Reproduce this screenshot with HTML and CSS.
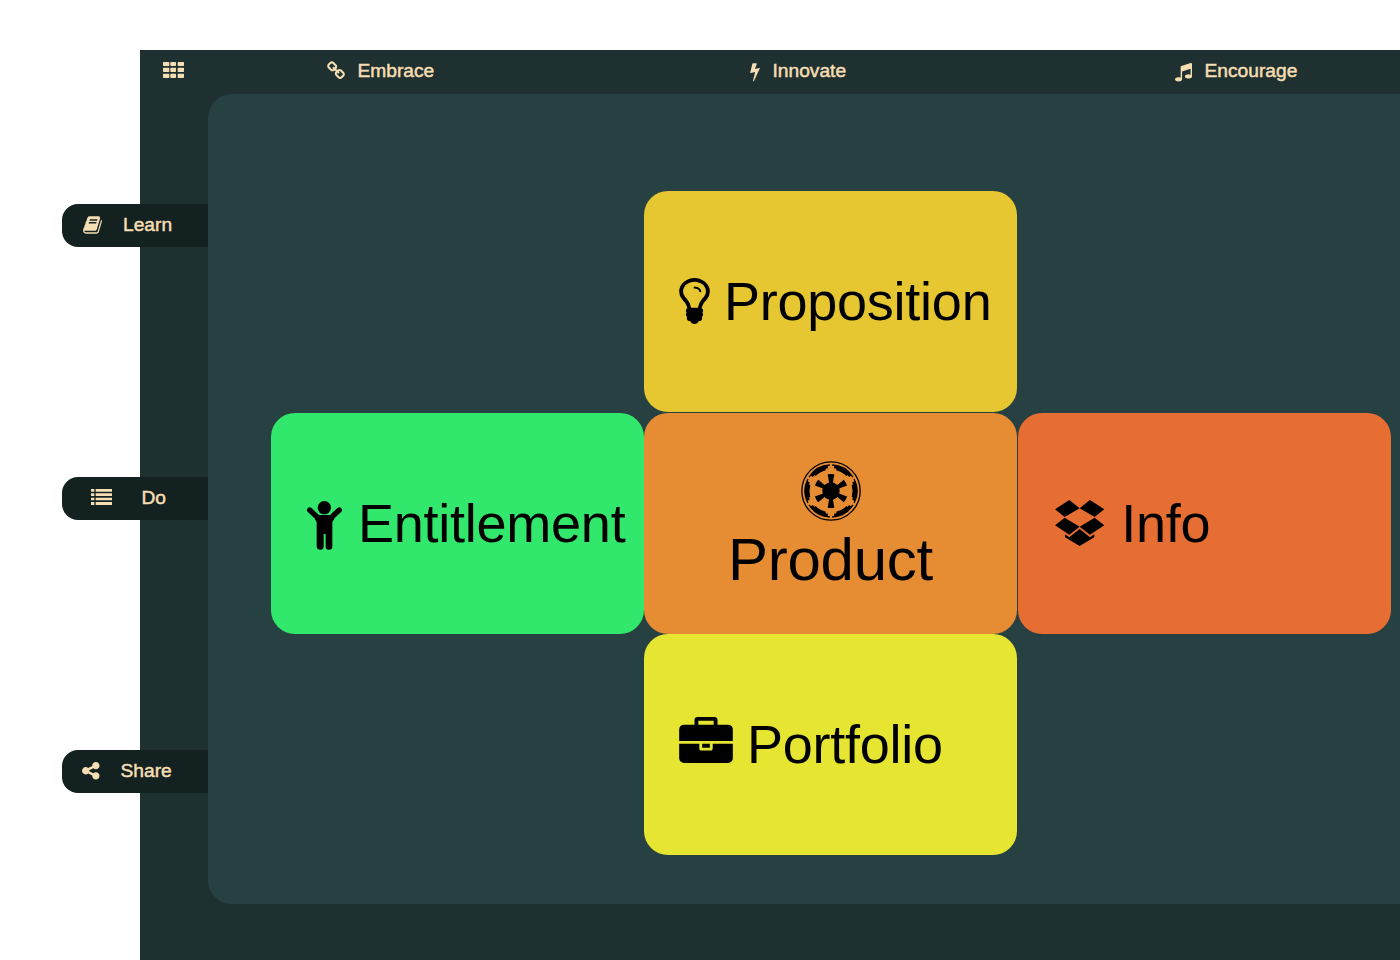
FILE: index.html
```html
<!DOCTYPE html>
<html lang="en">
<head>
<meta charset="utf-8">
<title>Product</title>
<link rel="stylesheet" href="styles.css">
</head>
<body>
<div class="app">
  <header class="topbar">
    <a class="menu"><svg class="icon menu-icon" viewBox="0 0 63 48"><path d="M2 0h15q2 0 2 2v8q0 2-2 2H2q-2 0-2-2V2q0-2 2-2zM24 0h13q2 0 2 2v8q0 2-2 2H24q-2 0-2-2V2q0-2 2-2zM46 0h15q2 0 2 2v8q0 2-2 2H46q-2 0-2-2V2q0-2 2-2zM2 17h15q2 0 2 2v9q0 2-2 2H2q-2 0-2-2v-9q0-2 2-2zM24 17h13q2 0 2 2v9q0 2-2 2H24q-2 0-2-2v-9q0-2 2-2zM46 17h15q2 0 2 2v9q0 2-2 2H46q-2 0-2-2v-9q0-2 2-2zM2 35h15q2 0 2 2v9q0 2-2 2H2q-2 0-2-2v-9q0-2 2-2zM24 35h13q2 0 2 2v9q0 2-2 2H24q-2 0-2-2v-9q0-2 2-2zM46 35h15q2 0 2 2v9q0 2-2 2H46q-2 0-2-2v-9q0-2 2-2z"/></svg></a>
    <a class="nav-item"><svg class="icon link-icon" viewBox="64 80 1664 1664"><path d="M1520 1216q0-40-28-68l-208-208q-28-28-68-28-42 0-72 32 3 3 19 18.5t21.5 21.5 15 19 13 25.5 3.5 27.5q0 40-28 68t-68 28q-15 0-27.500-3.500t-25.500-13-19-15-21.500-21.500-18.500-19q-33 31-33 73 0 40 28 68l206 207q27 27 68 27 40 0 68-26l147-146q28-28 28-67zm-703-705q0-40-28-68l-206-207q-28-28-68-28-39 0-68 27l-147 146q-28 28-28 67 0 40 28 68l208 208q27 27 68 27 42 0 72-31-3-3-19-18.500t-21.500-21.500-15-19-13-25.500-3.500-27.500q0-40 28-68t68-28q15 0 27.500 3.500t25.500 13 19 15 21.500 21.500 18.500 19q33-31 33-73zm895 705q0 120-85 203l-147 146q-83 83-203 83-121 0-204-85l-206-207q-83-83-83-203 0-123 88-209l-88-88q-86 88-208 88-120 0-204-84l-208-208q-84-84-84-204t85-203l147-146q83-83 203-83 121 0 204 85l206 207q83 83 83 203 0 123-88 209l88 88q86-88 208-88 120 0 204 84l208 208q84 84 84 204z"/></svg><span>Embrace</span></a>
    <a class="nav-item"><svg class="icon bolt-icon" viewBox="448 0 896 1792"><path d="M1333 566q18 20 7 44l-540 1157q-13 25-42 25-4 0-14-2-17-5-25.500-19t-4.500-30l197-808-406 101q-4 1-12 1-18 0-31-11-18-15-13-39l201-825q4-14 16-23t28-9h328q19 0 32 12.500t13 29.500q0 8-5 18l-171 463 396-98q8-2 12-2 19 0 34 15z"/></svg><span>Innovate</span></a>
    <a class="nav-item"><svg class="icon music-icon" viewBox="128 128 1536 1536"><path d="M1664 224v1120q0 50-34 89t-86 60.500-103.500 32-96.500 10.500-96.500-10.500-103.500-32-86-60.500-34-89 34-89 86-60.500 103.500-32 96.500-10.500q105 0 192 39v-537l-768 237v709q0 50-34 89t-86 60.500-103.500 32-96.500 10.500-96.500-10.500-103.500-32-86-60.500-34-89 34-89 86-60.500 103.500-32 96.500-10.500q105 0 192 39v-967q0-31 19-56.500t49-35.500l832-256q12-4 28-4 40 0 68 28t28 68z"/></svg><span>Encourage</span></a>
  </header>
  <div class="main">
    <nav class="rail">
      <a class="tab tab-learn"><svg class="icon book-icon" viewBox="60 128 1672 1536"><path d="M1703 478q40 57 18 129l-275 906q-19 64-76.500 107.500t-122.500 43.500h-923q-77 0-148.500-53.500t-99.500-131.500q-24-67-2-127 0-4 3-27t4-37q1-8-3-21.500t-3-19.500q2-11 8-21t16.500-23.500 16.500-23.500q23-38 45-91.500t30-91.500q3-10 .5-30t-.5-28q3-11 17-28t17-23q21-36 42-92t25-90q1-9-2.500-32t.5-28q4-13 22-30.500t22-22.500q19-26 42.500-84.500t27.500-96.500q1-8-3-25.500t-2-26.500q2-8 9-18t18-23 17-21q8-12 16.500-30.500t15-35 16-36 19.500-32 26.500-23.500 36-11.500 47.500 5.500l-1 3q38-9 51-9h761q74 0 114 56t18 130l-274 906q-36 119-71.500 153.500t-128.500 34.500h-869q-27 0-38 15-11 16-1 43 24 70 144 70h923q29 0 56-15.500t35-41.500l300-987q7-22 5-57 38 15 59 43zm-1064 2q-4 13 2 22.500t20 9.500h608q13 0 25.500-9.500t16.500-22.500l21-64q4-13-2-22.500t-20-9.500h-608q-13 0-25.500 9.500t-16.500 22.500zm-83 256q-4 13 2 22.500t20 9.500h608q13 0 25.500-9.500t16.500-22.500l21-64q4-13-2-22.500t-20-9.500h-608q-13 0-25.500 9.500t-16.500 22.500z"/></svg><span>Learn</span></a>
      <a class="tab tab-do"><svg class="icon list-icon" viewBox="0 0 63 48"><path d="M1 0h9v8H0V1zM14 0h49v8H14zM0 13h10v8H0zM14 13h49v8H14zM0 26h10v8H0zM14 26h49v8H14zM0 39h10v9H0zM14 39h49v9H14z"/></svg><span>Do</span></a>
      <a class="tab tab-share"><svg class="icon share-icon" viewBox="128 128 1536 1536"><path d="M1344 1024q133 0 226.500 93.500t93.500 226.500-93.500 226.500-226.500 93.500-226.500-93.500-93.500-226.500q0-12 2-34l-360-180q-92 86-218 86-133 0-226.500-93.500t-93.500-226.500 93.500-226.500 226.500-93.500q126 0 218 86l360-180q-2-22-2-34 0-133 93.500-226.500t226.500-93.500 226.500 93.500 93.500 226.500-93.500 226.500-226.500 93.500q-126 0-218-86l-360 180q2 22 2 34t-2 34l360 180q92-86 218-86z"/></svg><span>Share</span></a>
    </nav>
    <main class="panel">
      <section class="tile proposition"><svg class="icon bulb-icon" viewBox="384 128 1024 1536"><path d="M1120 576q0 13-9.500 22.500t-22.500 9.500-22.500-9.500-9.500-22.500q0-46-54-71t-106-25q-13 0-22.500-9.500t-9.500-22.500 9.500-22.500 22.500-9.500q50 0 99.500 16t87 54 37.500 90zm160 0q0-72-34.500-134t-90-101.500-123-62-136.500-22.500-136.500 22.500-123 62-90 101.500-34.500 134q0 101 68 180 10 11 30.500 33t30.500 33q128 153 141 298h228q13-145 141-298 10-11 30.500-33t30.500-33q68-79 68-180zm128 0q0 155-103 268-45 49-74.500 87t-59.500 95.500-34 107.500q47 28 47 82 0 37-25 64 25 27 25 64 0 52-45 81 13 23 13 47 0 46-31.500 71t-77.500 25q-20 44-60 70t-87 26-87-26-60-70q-46 0-77.500-25t-31.500-71q0-24 13-47-45-29-45-81 0-37 25-64-25-27-25-64 0-54 47-82-4-50-34-107.500t-59.500-95.500-74.500-87q-103-113-103-268 0-99 44.500-184.500t117-142 164-89 186.500-32.500 186.500 32.500 164 89 117 142 44.500 184.500z"/></svg><span>Proposition</span></section>
      <section class="tile entitlement"><svg class="icon child-icon" viewBox="0 0 105 146"><circle cx="52" cy="20" r="20"/><path class="arms" d="M8 27L37 54M97 27L68 54"/><path d="M31 42H74L82 54 76 63V137Q76 146 66 146T56 137V99H50V137Q50 146 40 146T29 137V63L23 54Z"/></svg><span>Entitlement</span></section>
      <section class="tile product">
        <svg class="icon empire-icon" viewBox="-90 -90 180 180">
          <defs>
            <g id="segment">
              <path class="rim" d="M69.200-36A78 78 0 0 1 69.200 36"/>
              <path class="plate" d="M67.900-28.100A73.500 73.500 0 0 1 67.900 28.100"/>
              <path class="tooth" d="M65.400-18.700A68 68 0 0 1 65.400 18.700"/>
            </g>
            <path id="spoke" d="M-5-20L-10-50Q0-52 10-50L5-20Z"/>
          </defs>
          <circle class="ring" r="87.500"/>
          <use href="#segment"/><use href="#segment" transform="rotate(60)"/><use href="#segment" transform="rotate(120)"/><use href="#segment" transform="rotate(180)"/><use href="#segment" transform="rotate(240)"/><use href="#segment" transform="rotate(300)"/>
          <circle r="26"/>
          <use href="#spoke"/><use href="#spoke" transform="rotate(60)"/><use href="#spoke" transform="rotate(120)"/><use href="#spoke" transform="rotate(180)"/><use href="#spoke" transform="rotate(240)"/><use href="#spoke" transform="rotate(300)"/>
        </svg>
        <span>Product</span></section>
      <section class="tile info"><svg class="icon dropbox-icon" viewBox="0 0 148 138"><path d="M43 0L74 25 29 51 0 28ZM105 0L148 28 119 51 74 25ZM29 53L74 80 43 104 0 76ZM119 53L148 76 105 104 74 80ZM74 87L105 112 118 103V112L74 138 30 112V103L43 112Z"/></svg><span>Info</span></section>
      <section class="tile portfolio"><svg class="icon case-icon" viewBox="0 0 1792 1536"><path d="M640 128h512v-128h-512v128zm1152 640v480q0 66-47 113t-113 47h-1472q-66 0-113-47t-47-113v-480h672v160q0 26 19 45t45 19h320q26 0 45-19t19-45v-160h672zm-768 0v128h-256v-128h256zm768-480v384h-1792v-384q0-66 47-113t113-47h352v-160q0-40 28-68t68-28h576q40 0 68 28t28 68v160h352q66 0 113 47t47 113z" transform="translate(0 128)"/></svg><span>Portfolio</span></section>
    </main>
  </div>
</div>
</body>
</html>
```
FILE: styles.css
```css
* { box-sizing: border-box; }
html { overflow: hidden; }
body {
  margin: 0;
  height: 960px;
  padding: 50px 0 0 140px;
  background: #fff;
  font-family: "Liberation Sans", Arial, sans-serif;
}
.app { height: 910px; background: #1e302f; color: #f5deb3; }
.icon { display: block; flex: none; fill: currentColor; overflow: visible; }

.topbar {
  display: grid;
  grid-template-columns: 187px 423px 425px 225px;
  height: 44px;
  font-size: 19.2px;
  line-height: 22px;
  -webkit-text-stroke: 0.5px #f5deb3;
}
.menu { padding: 12px 0 0 23.3px; }
.nav-item { display: flex; align-items: flex-start; padding-top: 10px; }
.menu-icon { width: 21px; height: 16px; }
.link-icon { width: 18px; height: 18px; margin: 1.500px 12.500px 0 0; }
.bolt-icon { width: 10px; height: 19.200px; margin: 1.500px 12.500px 0 0; }
.music-icon { width: 17px; height: 19px; margin: 1.500px 12.500px 0 0; }

.main { display: grid; grid-template-columns: 68px 1fr; height: 810px; }
.rail { display: flex; flex-direction: column; gap: 230px; padding-top: 110px; }
.tab {
  display: flex;
  width: 146px;
  height: 43px;
  margin-left: -78px;
  padding-top: 10px;
  background: #132120;
  border-radius: 16px 0 0 16px;
  font-size: 19.2px;
  line-height: 22px;
  -webkit-text-stroke: 0.5px #f5deb3;
}
.tab-learn { padding-left: 21px; }
.tab-do { padding-left: 29px; }
.tab-share { padding-left: 20px; }
.book-icon { width: 19px; height: 18px; margin: 2px 21px 0 0; }
.list-icon { width: 21px; height: 16px; margin: 2px 29.500px 0 0; }
.share-icon { width: 17.500px; height: 17.500px; margin: 2px 21px 0 0; }

.panel {
  display: grid;
  grid-template-columns: 373px 374px 373px;
  grid-template-rows: 221px 222px 221px;
  padding: 97px 0 0 63px;
  background: #274142;
  border-radius: 24px 0 0 24px;
  color: #000;
}
.tile {
  display: flex;
  align-items: flex-start;
  width: 373px;
  height: 221px;
  padding: 79px 0 0 35px;
  border-radius: 24px;
  font-size: 54px;
  line-height: 62px;
  letter-spacing: -0.250px;
  white-space: nowrap;
}
.proposition { grid-area: 1 / 2; background: #e6c732; }
.entitlement { grid-area: 2 / 1; background: #32e86c; margin-top: 1px; padding-left: 36px; }
.product {
  grid-area: 2 / 2;
  flex-direction: column;
  align-items: center;
  margin-top: 1px;
  padding: 48px 0 0;
  background: #e68c32;
  font-size: 60px;
  line-height: 68px;
}
.info { grid-area: 2 / 3; background: #e66e32; margin-top: 1px; padding-left: 37px; }
.portfolio { grid-area: 3 / 2; background: #e6e632; }

.bulb-icon { width: 31px; height: 46px; margin: 8px 14px 0 0; }
.child-icon { width: 35px; height: 48.700px; margin: 9px 16px 0 0; }
.dropbox-icon { width: 49.300px; height: 46px; margin: 8px 17px 0 0; }
.case-icon { width: 54px; height: 46px; margin: 4px 14px 0 0; }
.empire-icon { width: 60px; height: 60px; margin-bottom: 5px; }
.arms { fill: none; stroke: #000; stroke-width: 16; stroke-linecap: round; }
.ring { fill: none; stroke: #000; stroke-width: 4; }
.rim { fill: none; stroke: #000; stroke-width: 4; }
.plate { fill: none; stroke: #000; stroke-width: 9; }
.tooth { fill: none; stroke: #000; stroke-width: 7; }
```
